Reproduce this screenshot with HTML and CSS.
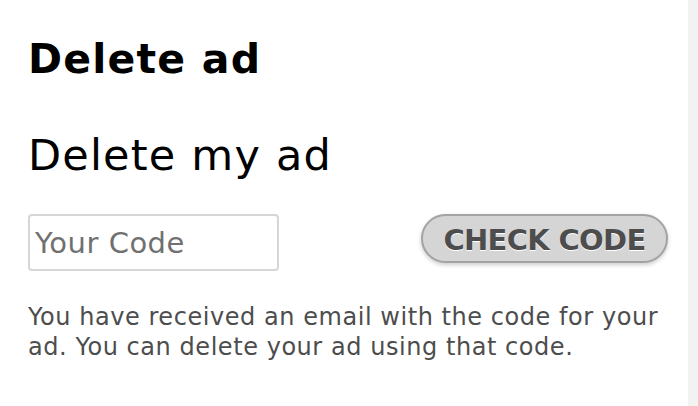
FILE: index.html
```html
<!DOCTYPE html>
<html lang="en">
<head>
    <meta charset="UTF-8">
    <meta name="viewport" content="width=device-width, initial-scale=1.0">
    <title>Delete ad</title>
    <link rel="stylesheet" href="styles.css">
</head>
<body>
    <div class="page">
        <h1>Delete ad</h1>
        <h2>Delete my ad</h2>
        <div class="code-row">
            <input type="text" id="txtCode" placeholder="Your Code">
            <button id="btnCheck">CHECK CODE</button>
        </div>
        <p class="hint">You have received an email with the code for your ad. You can delete your ad using that code.</p>
    </div>
</body>
</html>
```

FILE: styles.css
```css
body {
    margin: 0;
    padding: 0;
    background-color: #f2f2f2;
    font-family: "DejaVu Sans", Verdana, sans-serif;
}

.page {
    background-color: white;
    width: 688px;
    min-height: 406px;
    box-sizing: border-box;
    padding: 35px 18px 0 28px;
}

h1 {
    margin: 0;
    font-size: 41px;
    line-height: 48px;
    font-weight: bold;
    letter-spacing: 1.2px;
    color: #000;
}

h2 {
    margin: 48px 0 0 0;
    font-size: 43px;
    line-height: 48px;
    font-weight: normal;
    letter-spacing: 1.2px;
    color: #000;
}

.code-row {
    margin-top: 35px;
    display: flex;
    justify-content: space-between;
    align-items: flex-start;
}

.code-row input {
    width: 251px;
    height: 57px;
    box-sizing: border-box;
    border: 2px solid #d6d6d6;
    border-radius: 4px;
    padding: 0 5px;
    font-family: "DejaVu Sans", Verdana, sans-serif;
    font-size: 29px;
    letter-spacing: 0.5px;
    color: #333;
    outline: none;
}

.code-row input::placeholder {
    color: #707070;
}

#btnCheck {
    width: 247px;
    height: 49px;
    margin-right: 2px;
    box-sizing: border-box;
    border: 2px solid #a3a3a3;
    border-radius: 25px;
    background-color: #d5d5d5;
    box-shadow: 0 2px 4px rgba(0, 0, 0, 0.2);
    font-family: "DejaVu Sans", Verdana, sans-serif;
    font-size: 29px;
    font-weight: bold;
    letter-spacing: -0.7px;
    color: #4d4d4d;
    text-shadow: 0 1px 0 #fff;
    padding: 2px 0 0 0;
    cursor: pointer;
}

.hint {
    margin: 31px 0 0 0;
    font-size: 24px;
    line-height: 30px;
    letter-spacing: 0.55px;
    color: #4d4d4d;
}
```
